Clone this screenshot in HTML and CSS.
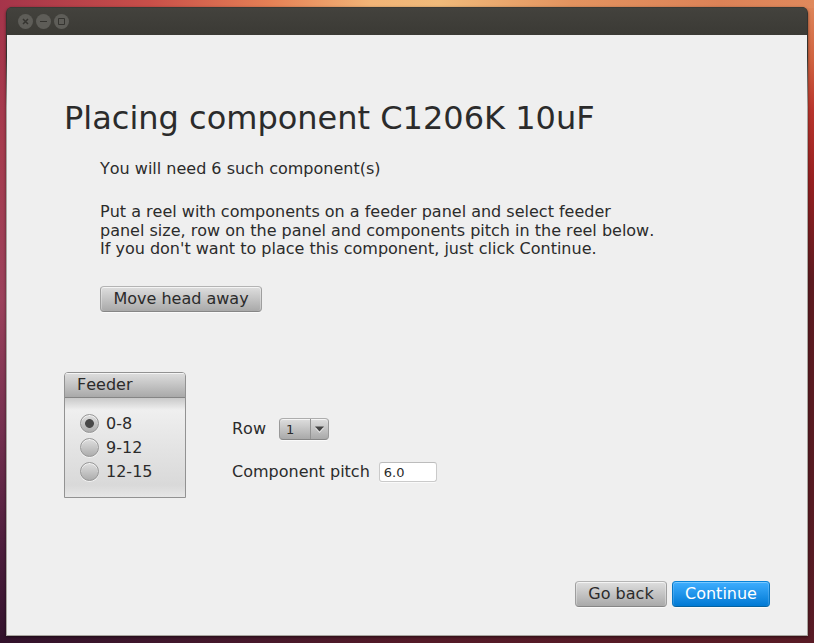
FILE: index.html
```html
<!DOCTYPE html>
<html lang="en">
<head>
<meta charset="utf-8">
<title>Component placement</title>
<link rel="stylesheet" href="styles.css">
</head>
<body>
<div class="window">
  <header class="titlebar">
    <svg class="control" viewBox="0 0 15 15"><circle cx="7.5" cy="7.5" r="7.5"/><path class="cross" d="M5 5l5 5M10 5l-5 5"/></svg>
    <svg class="control" viewBox="0 0 15 15"><circle cx="7.5" cy="7.5" r="7.5"/><path d="M4 7.500h7"/></svg>
    <svg class="control" viewBox="0 0 15 15"><circle cx="7.5" cy="7.5" r="7.5"/><path d="M4.500 4.500h6v6h-6z"/></svg>
  </header>
  <main class="content">
    <h1>Placing component C1206K 10uF</h1>
    <section class="intro">
      <p>You will need 6 such component(s)</p>
      <p class="help">Put a reel with components on a feeder panel and select feeder<br>panel size, row on the panel and components pitch in the reel below.<br>If you don't want to place this component, just click Continue.</p>
      <button class="button move" type="button">Move head away</button>
    </section>
    <div class="settings">
      <section class="panel">
        <h2>Feeder</h2>
        <div class="options">
          <label class="option"><span class="radio selected"></span>0-8</label>
          <label class="option"><span class="radio"></span>9-12</label>
          <label class="option"><span class="radio"></span>12-15</label>
        </div>
      </section>
      <div class="fields">
        <div class="field row-field"><span>Row</span>
          <div class="combo"><span class="value">1</span><span class="arrow"><svg viewBox="0 0 9 7"><path class="shine" d="M0 2h9L4.500 7z"/><path d="M0 0.500h9L4.500 5.500z"/></svg></span></div>
        </div>
        <div class="field pitch-field"><span>Component pitch</span><input type="text" value="6.0"></div>
      </div>
    </div>
    <footer class="actions">
      <button class="button back" type="button">Go back</button>
      <button class="button primary" type="button">Continue</button>
    </footer>
  </main>
</div>
</body>
</html>
```
FILE: styles.css
```css
* { box-sizing: border-box; }
html, body { height: 100%; }
body {
  margin: 0;
  padding: 7px 6px;
  overflow: hidden;
  font: 16px/18.6px "DejaVu Sans", sans-serif;
  font-kerning: none;
  color: #2b2b2b;
  background:
    linear-gradient(90deg, #a5344a 0, #c94f49 150px, #e58055 270px, #f2b477 370px, #f0ba7a 440px, #e3935f 570px, #dc8257 720px, #e0895c 814px) 0 0 / 100% 8px no-repeat,
    linear-gradient(90deg, #32122b 0, #41172c 180px, #541a27 420px, #591b25 814px) 0 100% / 100% 8px no-repeat,
    linear-gradient(#a5344a 0, #a63c4e 150px, #9b415b 300px, #74304f 430px, #4c1d3c 550px, #32122b 643px) 0 0 / 50% 100% no-repeat,
    linear-gradient(#e0895c 0, #d0623f 60px, #b9342c 110px, #971f20 180px, #5d1a20 280px, #561a22 500px, #591b25 643px) 100% 0 / 50% 100% no-repeat;
}
.window {
  width: 802px;
  height: 629px;
  padding: 0 1px 1px;
  display: flex;
  flex-direction: column;
  border-radius: 6px 6px 0 0;
  background: linear-gradient(#33322e 0, #33322e 50px, #a8a59f 100px);
  box-shadow: 0 1px 3px rgba(0, 0, 0, .5);
}
.titlebar {
  height: 28px;
  flex: none;
  padding: 7px 11px;
  display: flex;
  gap: 3px;
  border-radius: 5px 5px 0 0;
  background: linear-gradient(#33322e 0, #43423d 1px, #3b3a35);
}
.control { width: 15px; height: 15px; fill: #5e5d58; }
.control path { fill: none; stroke: #353430; stroke-width: 1; }
.control .cross { stroke-width: 1.5; }
.content {
  flex: 1;
  padding: 64px 37px 28px 57px;
  background: #efefef;
  display: flex;
  flex-direction: column;
}
h1, h2, p { margin: 0; font-weight: normal; }
h1 { font-size: 32px; line-height: 38px; }
.intro { margin: 23px 0 0 36px; }
.help { margin-top: 24.4px; }
.button {
  display: block;
  height: 26px;
  padding: 0;
  border: 1px solid;
  border-color: #b4b4b4 #9e9e9e #868686;
  border-radius: 4px;
  font: 16px/24px "DejaVu Sans", sans-serif;
  font-kerning: none;
  color: #2b2b2b;
  background: linear-gradient(#dedede, #a9a9a9);
  box-shadow: inset 0 1px #f4f4f4, inset 1px 0 rgba(255, 255, 255, .3), inset -1px 0 rgba(255, 255, 255, .3), 0 1px #fafafa;
}
.move { width: 162px; margin-top: 27.6px; }
.settings { display: flex; margin-top: 60px; }
.panel {
  width: 122px;
  height: 126px;
  border: 1px solid #929292;
  border-radius: 4px 4px 0 0;
  overflow: hidden;
}
.panel h2 {
  height: 25px;
  padding: 2px 12px;
  font-size: 16px;
  line-height: 19px;
  border-bottom: 1px solid #858585;
  background: linear-gradient(#dedede, #a9a9a9);
  box-shadow: inset 0 1px #f4f4f4;
}
.options {
  height: 99px;
  padding: 16px 15px;
  display: flex;
  flex-direction: column;
  gap: 5px;
  background: linear-gradient(#c9c9c9 0, #efefef 12px, #e8e8e8 35px, #d9d9d9 87px, #e6e6e6 99px);
}
.option { height: 19px; display: flex; gap: 7px; line-height: 19px; }
.radio {
  width: 19px;
  height: 19px;
  border: 1px solid #969696;
  border-radius: 50%;
  background: linear-gradient(#dfdfdf, #adadad);
  box-shadow: inset 0 1px rgba(255, 255, 255, .75), 0 1px #f3f3f3;
}
.radio.selected { background: radial-gradient(circle, #484848 0, #484848 4px, transparent 4.800px), linear-gradient(#dfdfdf, #adadad); }
.fields { padding: 46px 0 0 46px; }
.field { display: flex; align-items: flex-start; white-space: nowrap; }
.row-field { height: 44px; gap: 13px; }
.field > span { line-height: 22px; }
.combo {
  width: 50px;
  height: 22px;
  display: flex;
  border: 1px solid;
  border-color: #adadad #999 #868686;
  border-radius: 4px;
  font-size: 13px;
  background: linear-gradient(#dedede, #a9a9a9);
  box-shadow: inset 0 1px #f4f4f4, 0 1px #fafafa;
}
.value { width: 31px; padding-left: 6px; line-height: 22px; border-right: 1px solid #929292; }
.arrow { flex: 1; display: flex; align-items: center; justify-content: center; }
.arrow svg { width: 9px; height: 7px; fill: #444; }
.arrow .shine { fill: #e5e5e5; }
.pitch-field { gap: 9px; }
.pitch-field > span { line-height: 20px; }
.pitch-field input {
  width: 58px;
  height: 20px;
  padding: 1px 4px 0;
  border: 1px solid #cacaca;
  border-top-color: #bcbcbc;
  border-radius: 3px;
  font: 13px "DejaVu Sans", sans-serif;
  color: #2b2b2b;
  background: #fff;
  box-shadow: 0 1px #fafafa;
}
.actions { display: flex; justify-content: flex-end; gap: 5px; margin-top: auto; }
.back { width: 92px; }
.primary {
  width: 98px;
  color: #fff;
  border-color: #0883d8 #0877c5 #05629f;
  background: linear-gradient(#3faeff, #0079d4);
  box-shadow: inset 0 1px #79c8ff, inset 1px 0 rgba(255, 255, 255, .15), inset -1px 0 rgba(255, 255, 255, .15), 0 1px #fafafa;
}
```
